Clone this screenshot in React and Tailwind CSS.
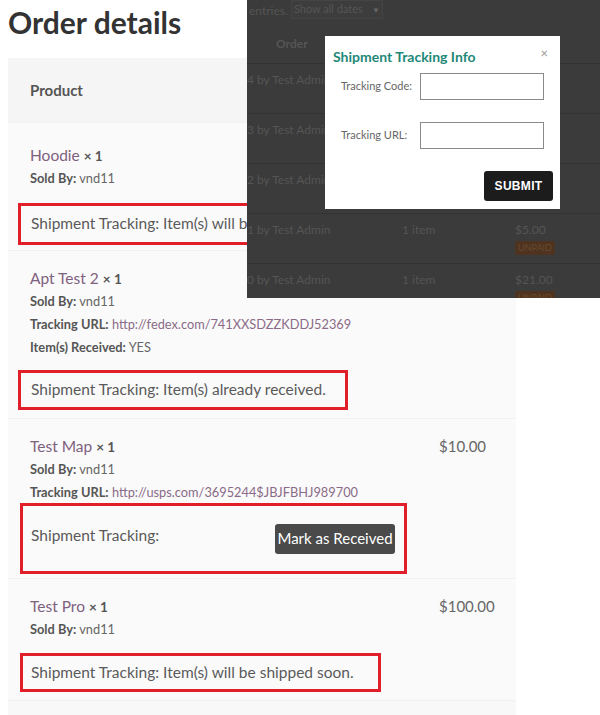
import React from "react";

const font = "font-['Lato','Liberation_Sans',sans-serif]";

function Meta({ label, value, link }) {
  return (
    <div className="text-[12.8px] leading-[23px] text-[#666]">
      <span className="font-bold text-[#555]">{label}</span>{" "}
      <span className={link ? "text-[#8a6a88]" : ""}>{value}</span>
    </div>
  );
}

function Title({ name }) {
  return (
    <div className="text-[15.5px] leading-[24px] text-[#80607f]">
      {name} <span className="font-bold text-[#555] text-[13.5px] leading-none">× 1</span>
    </div>
  );
}

function Box({ children, className }) {
  return (
    <div className={`border-[3px] border-[#e01f2b] flex items-center text-[15.5px] text-[#5a5a5a] ${className}`}>
      {children}
    </div>
  );
}

function Row({ className, price, children }) {
  return (
    <div className={`flex bg-[#fafafa] border-t border-[#f1f1f1] pl-[22px] ${className}`}>
      <div className="flex-1 flex flex-col">{children}</div>
      <div className="w-[77px] text-[15px] leading-[24px] text-[#666]">{price}</div>
    </div>
  );
}

function DarkRow({ who, items, price, badge }) {
  return (
    <div className="h-[50px] border-t border-[#333] flex text-[12px] text-[#555] pt-[7px]">
      <div className="w-[155px] whitespace-nowrap overflow-hidden">{who}</div>
      <div className="w-[113px]">{items}</div>
      <div className="flex flex-col items-start">
        <span>{price}</span>
        {badge && (
          <span className="mt-[2px] bg-[#4e3320] text-[#6a4a2c] text-[9px] px-[3px] leading-[14px] rounded-[2px]">
            {badge}
          </span>
        )}
      </div>
    </div>
  );
}

export default function App() {
  return (
    <div className={`relative w-[600px] h-[715px] bg-white overflow-hidden ${font}`}>
      <h1 className="pl-[8px] pt-[2px] h-[58px] text-[30px] leading-[40px] font-bold text-[#333]">
        Order details
      </h1>
      <div className="ml-[8px] w-[508px]">
        <div className="h-[64px] bg-[#f5f5f5] flex items-center pl-[22px] text-[15px] font-bold text-[#555]">
          Product
        </div>

        <Row className="pt-[20px] pb-[5px]">
          <Title name="Hoodie" />
          <Meta label="Sold By:" value="vnd11" />
          <Box className="-ml-[12px] pl-[10px] mt-[13px] h-[42px] w-[340px] whitespace-nowrap">
            Shipment Tracking: Item(s) will be shipped soon.
          </Box>
        </Row>

        <Row className="pt-[15px] pb-[8px]">
          <Title name="Apt Test 2" />
          <Meta label="Sold By:" value="vnd11" />
          <Meta label="Tracking URL:" value="http://fedex.com/741XXSDZZKDDJ52369" link />
          <Meta label="Item(s) Received:" value="YES" />
          <Box className="-ml-[12px] pl-[10px] mt-[11px] h-[40px] w-[330px]">
            Shipment Tracking: Item(s) already received.
          </Box>
        </Row>

        <Row className="pt-[15px] pb-[4px]" price="$10.00">
          <Title name="Test Map" />
          <Meta label="Sold By:" value="vnd11" />
          <Meta label="Tracking URL:" value="http://usps.com/3695244$JBJFBHJ989700" link />
          <Box className="-ml-[10px] pl-[8px] -mt-[1px] h-[71px] w-[387px] pr-[9px] justify-between">
            <span className="-mt-[5px]">Shipment Tracking:</span>
            <button className="w-[120px] h-[30px] rounded-[3px] bg-[#4a4a4a] text-white text-[15px] whitespace-nowrap">
              Mark as Received
            </button>
          </Box>
        </Row>

        <Row className="pt-[15px] pb-[8px]" price="$100.00">
          <Title name="Test Pro" />
          <Meta label="Sold By:" value="vnd11" />
          <Box className="-ml-[10px] pl-[8px] mt-[12px] h-[39px] w-[361px]">
            Shipment Tracking: Item(s) will be shipped soon.
          </Box>
        </Row>
        <div className="h-[20px] bg-[#f8f8f8] border-t border-[#f1f1f1]" />
      </div>

      {/* Overlay screenshot */}
      <div className="absolute left-[247px] top-0 w-[353px] h-[298px] bg-[#3b3b3b] overflow-hidden">
        <div className="flex items-start text-[12px] text-[#555] h-[25px]">
          <span className="pl-[2px] pt-[2px]">entries.</span>
          <div className="ml-[3px] w-[92px] h-[19px] border border-[#444] bg-[#3d3d3d] flex items-center justify-between px-[2px] text-[11px]">
            <span>Show all dates</span>
            <span className="text-[8px] text-[#666]">▼</span>
          </div>
        </div>
        <div className="h-[38px] flex items-center pl-[29px] text-[12px] font-bold text-[#555]">
          Order
        </div>
        <DarkRow who="4 by Test Admin" />
        <DarkRow who="3 by Test Admin" />
        <DarkRow who="2 by Test Admin" />
        <DarkRow who="1 by Test Admin" items="1 item" price="$5.00" badge="UNPAID" />
        <DarkRow who="0 by Test Admin" items="1 item" price="$21.00" badge="UNPAID" />

        {/* Modal */}
        <div className="absolute left-[78px] top-[36px] w-[235px] h-[173px] bg-white">
          <div className="flex items-start justify-between pl-[8px] pr-[12px] pt-[10px]">
            <span className="text-[14px] font-bold text-[#1e8878]">Shipment Tracking Info</span>
            <span className="text-[13px] text-[#999] -mt-[2px]">×</span>
          </div>
          <div className="mt-[6px] flex items-center pl-[16px]">
            <span className="w-[79px] text-[11px] text-[#666]">Tracking Code:</span>
            <div className="w-[124px] h-[27px] border border-[#8a8a8a]" />
          </div>
          <div className="mt-[22px] flex items-center pl-[16px]">
            <span className="w-[79px] text-[11px] text-[#666]">Tracking URL:</span>
            <div className="w-[124px] h-[27px] border border-[#8a8a8a]" />
          </div>
          <div className="mt-[22px] flex justify-end pr-[7px]">
            <button className="w-[69px] h-[30px] rounded-[3px] bg-[#1c1c1c] text-white text-[12px] font-bold font-['Liberation_Sans',sans-serif] tracking-[0.3px]">
              SUBMIT
            </button>
          </div>
        </div>
      </div>
    </div>
  );
}
